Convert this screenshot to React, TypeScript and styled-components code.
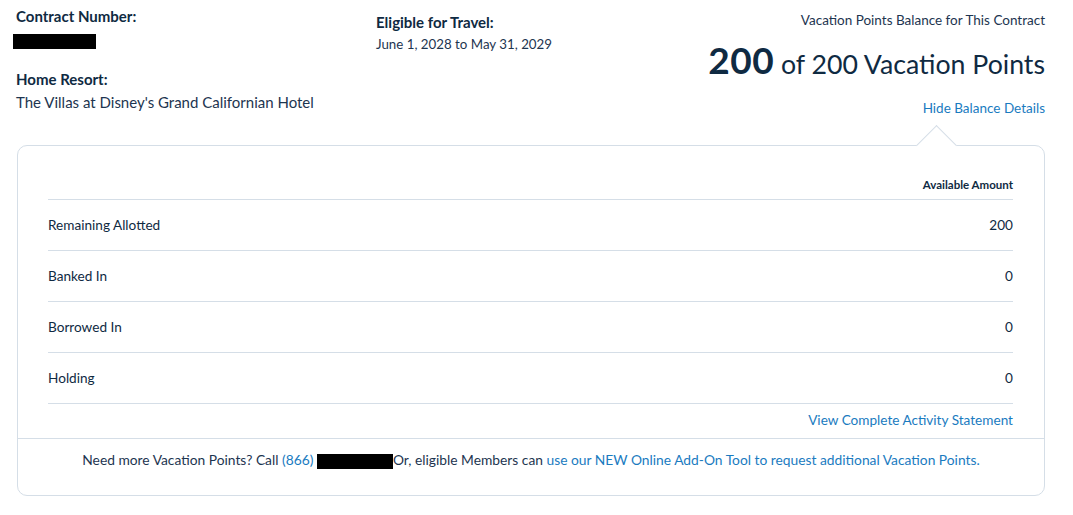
import React from 'react';
import styled, {createGlobalStyle} from 'styled-components';

const GlobalStyle = createGlobalStyle`
  body {
    margin: 0;
    background: #ffffff;
    font-family: Lato, "Open Sans", sans-serif;
    color: #0f2a42;
  }
  p, h2 {
    margin: 0;
  }
`;

const Page = styled.div`
  width: 1029px;
  padding: 6px 28px 20px 16px;
`;

const Header = styled.div`
  display: grid;
  grid-template-columns: 360px 1fr auto;
`;

const InfoColumn = styled.div<{$top?: number}>`
  display: flex;
  flex-direction: column;
  padding-top: ${p => p.$top || 0}px;
`;

const Label = styled.h2`
  font-size: 15px;
  font-weight: 700;
  line-height: 20px;
  color: #0f2a42;
`;

const Value = styled.p<{$size?: number; $gap?: number}>`
  margin-top: ${p => p.$gap || 0}px;
  font-size: ${p => p.$size || 15}px;
  line-height: 20px;
  color: #1d3550;
`;

const Redacted = styled.span<{$w: number}>`
  display: inline-block;
  width: ${p => p.$w}px;
  height: 15px;
  background: #000;
  vertical-align: middle;
`;

const RedactedLine = styled.div`
  margin: 8px 0 20px -3px;
  line-height: 0;
`;

const Balance = styled.div`
  display: flex;
  flex-direction: column;
  align-items: flex-end;
  padding-top: 4px;
`;

const BalanceCaption = styled.p`
  font-size: 13.5px;
  line-height: 20px;
  color: #1d3550;
`;

const BalanceBig = styled.p`
  margin-top: 10px;
  font-size: 26.7px;
  line-height: 40px;
  color: #0f2a42;

  & b {
    font-size: 37px;
    font-weight: 700;
    letter-spacing: 0.5px;
  }
`;

const Link = styled.a`
  color: #1a7bbf;
  text-decoration: none;
  cursor: pointer;
`;

const ToggleLink = styled(Link)`
  margin-top: 14px;
  font-size: 13.5px;
  line-height: 20px;
`;

const Card = styled.div`
  position: relative;
  margin-top: 27px;
  margin-left: 1px;
  border: 1px solid #d5dee7;
  border-radius: 10px;
  background: #fff;

  &::before {
    content: '';
    position: absolute;
    top: -15px;
    left: 904px;
    width: 28px;
    height: 28px;
    background: #fff;
    border-top: 1px solid #d5dee7;
    border-left: 1px solid #d5dee7;
    transform: rotate(45deg);
  }
`;

const Details = styled.div`
  padding: 30px 31px 9px 30px;
`;

const Table = styled.table`
  width: 100%;
  border-collapse: collapse;
  font-size: 13.6px;
  color: #0f2a42;

  & th {
    text-align: right;
    font-size: 11.5px;
    font-weight: 700;
    line-height: 18px;
    padding: 0 0 5px;
    border-bottom: 1px solid #d5dee7;
  }

  & td {
    height: 50px;
    border-bottom: 1px solid #d5dee7;
    padding: 0;
  }

  & td:last-child {
    text-align: right;
  }
`;

const StatementRow = styled.div`
  display: flex;
  justify-content: flex-end;
  padding-top: 7px;
  font-size: 13.6px;
  line-height: 18px;
`;

const Footer = styled.div`
  border-top: 1px solid #d5dee7;
  padding: 12px 0 26px;
  text-align: center;
  font-size: 13.8px;
  line-height: 18px;
  color: #1d3550;
`;

const rows = [
  {label: 'Remaining Allotted', amount: 200},
  {label: 'Banked In', amount: 0},
  {label: 'Borrowed In', amount: 0},
  {label: 'Holding', amount: 0},
];

const App: React.FC = () => {
  return (
    <Page>
      <GlobalStyle/>
      <Header>
        <InfoColumn>
          <Label>Contract Number:</Label>
          <RedactedLine><Redacted $w={83}/></RedactedLine>
          <Label>Home Resort:</Label>
          <Value $gap={3}>The Villas at Disney's Grand Californian Hotel</Value>
        </InfoColumn>
        <InfoColumn $top={6}>
          <Label>Eligible for Travel:</Label>
          <Value $size={13.3} $gap={2}>June 1, 2028 to May 31, 2029</Value>
        </InfoColumn>
        <Balance>
          <BalanceCaption>Vacation Points Balance for This Contract</BalanceCaption>
          <BalanceBig><b>200</b> of 200 Vacation Points</BalanceBig>
          <ToggleLink>Hide Balance Details</ToggleLink>
        </Balance>
      </Header>
      <Card>
        <Details>
          <Table>
            <thead>
              <tr>
                <th colSpan={2}>Available Amount</th>
              </tr>
            </thead>
            <tbody>
              {rows.map(row => (
                <tr key={row.label}>
                  <td>{row.label}</td>
                  <td>{row.amount}</td>
                </tr>
              ))}
            </tbody>
          </Table>
          <StatementRow>
            <Link>View Complete Activity Statement</Link>
          </StatementRow>
        </Details>
        <Footer>
          Need more Vacation Points? Call <Link>(866)</Link> <Redacted $w={76}/>Or, eligible Members can{' '}
          <Link>use our NEW Online Add-On Tool to request additional Vacation Points.</Link>
        </Footer>
      </Card>
    </Page>
  );
};

export default App;
